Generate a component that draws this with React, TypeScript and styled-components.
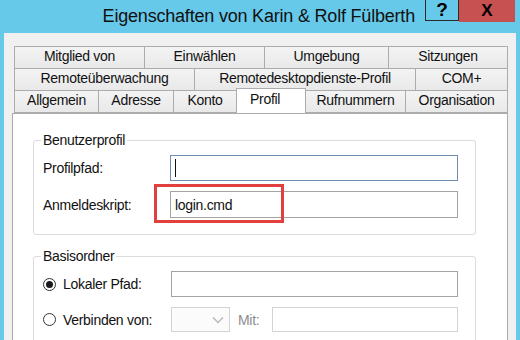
import React from 'react'
import styled, { createGlobalStyle, css } from 'styled-components'

const GlobalStyle = createGlobalStyle`
  html, body {
    margin: 0;
    padding: 0;
    background: #67c9ea;
  }
  body {
    font-family: 'Liberation Sans', Arial, sans-serif;
    color: #1a1a1a;
  }
`

const Window = styled.div`
  width: 520px;
  height: 340px;
  overflow: hidden;
  display: flex;
  flex-direction: column;
  background: #67c9ea;
`

const TitleBar = styled.div`
  height: 33px;
  flex: none;
  display: flex;
  align-items: flex-start;
  justify-content: flex-end;
  padding-right: 5px;
`

const Title = styled.div`
  font-size: 18px;
  line-height: 18px;
  letter-spacing: -0.2px;
  padding-top: 7px;
  margin-right: 10px;
  color: #111;
`

const CaptionButton = styled.div<{ close?: boolean }>(
  ({ close }) => css`
    height: ${close ? 22 : 21}px;
    width: ${close ? 56 : 34}px;
    box-sizing: border-box;
    display: flex;
    align-items: center;
    justify-content: center;
    font-weight: bold;
    color: #000;
    background: ${close ? '#c75050' : 'transparent'};
    border: 1px solid ${close ? '#c75050' : '#2b2b2b'};
    border-top: none;
    font-size: ${close ? 17 : 19}px;
  `,
)

const Client = styled.div`
  flex: 1;
  margin: 0 4px;
  background: #f0f0f0;
  padding: 13px 8px 0 8px;
  display: flex;
  flex-direction: column;
`

const TabRow = styled.div`
  display: flex;
  align-items: flex-start;
  height: 22px;
  margin-left: 2px;
`

const Tab = styled.div<{ w: number; selected?: boolean }>(
  ({ w, selected }) => css`
    box-sizing: border-box;
    width: ${w + 1}px;
    height: ${selected ? 25 : 23}px;
    margin-left: -1px;
    margin-top: ${selected ? -2 : 0}px;
    &:first-child {
      margin-left: 0;
    }
    border: 1px solid #acacac;
    border-bottom: ${selected ? 'none' : '1px solid #acacac'};
    background: ${selected ? '#fff' : 'linear-gradient(#f3f3f3, #e9e9e9)'};
    position: relative;
    z-index: ${selected ? 2 : 1};
    font-size: 14px;
    letter-spacing: -0.3px;
    text-align: ${selected ? 'left' : 'center'};
    padding-left: ${selected ? 13 : 0}px;
    line-height: ${selected ? 20 : 19}px;
    color: #111;
    white-space: nowrap;
  `,
)

const Panel = styled.div`
  flex: 1;
  margin-top: 1px;
  background: #fff;
  border: 1px solid #acacac;
  border-bottom: none;
  padding: 18px 31px 0 20px;
  position: relative;
  z-index: 0;
`

const Group = styled.fieldset<{ bottom: number }>(
  ({ bottom }) => css`
    margin: 0 0 13px 0;
    padding: 0 17px ${bottom}px 9px;
    border: 1px solid #dcdcdc;
    border-radius: 3px;
    min-width: 0;
  `,
)

const Legend = styled.legend`
  font-size: 14px;
  letter-spacing: -0.3px;
  line-height: 16px;
  padding: 0 2px;
  margin-left: -2px;
  color: #111;
`

const FieldRow = styled.div<{ gap?: number }>(
  ({ gap = 0 }) => css`
    display: flex;
    align-items: center;
    margin-top: ${gap}px;
  `,
)

const Label = styled.div<{ w: number; disabled?: boolean }>(
  ({ w, disabled }) => css`
    width: ${w}px;
    flex: none;
    font-size: 14px;
    letter-spacing: -0.3px;
    color: ${disabled ? '#8d8d8d' : '#111'};
    white-space: nowrap;
  `,
)

const TextBox = styled.div<{ tone?: 'focus' | 'normal' | 'disabled'; h?: number }>(
  ({ tone = 'normal', h = 26 }) => css`
    flex: 1;
    box-sizing: border-box;
    height: ${h}px;
    border: 1px solid
      ${tone === 'focus' ? '#6d8db3' : tone === 'disabled' ? '#d3d3d3' : '#a3a3a3'};
    background: #fff;
    display: flex;
    align-items: center;
    padding-left: 4px;
    font-size: 14px;
    letter-spacing: -0.3px;
    color: #111;
    position: relative;
  `,
)

const Caret = styled.span`
  width: 1px;
  height: 18px;
  background: #111;
`

const Highlight = styled.div`
  position: absolute;
  left: -17px;
  top: -8px;
  width: 130px;
  height: 39px;
  border: 3px solid #e2403f;
  box-sizing: border-box;
  pointer-events: none;
`

const Radio = styled.span<{ checked?: boolean }>(
  ({ checked }) => css`
    width: 13px;
    height: 13px;
    box-sizing: border-box;
    border: 1px solid #333;
    border-radius: 50%;
    background: #fff;
    display: inline-flex;
    align-items: center;
    justify-content: center;
    margin-right: 7px;
    flex: none;
    &::after {
      content: '';
      width: 7px;
      height: 7px;
      border-radius: 50%;
      background: ${checked ? '#1a1a1a' : 'transparent'};
    }
  `,
)

const RadioLabel = styled.div<{ w: number }>(
  ({ w }) => css`
    width: ${w}px;
    flex: none;
    display: flex;
    align-items: center;
    font-size: 14px;
    letter-spacing: -0.3px;
    color: #111;
    white-space: nowrap;
  `,
)

const Combo = styled.div`
  width: 59px;
  height: 25px;
  box-sizing: border-box;
  border: 1px solid #d3d3d3;
  background: #fbfbfb;
  display: flex;
  align-items: center;
  justify-content: flex-end;
  padding-right: 5px;
  margin-right: 8px;
  flex: none;
`

const tabs = [
  [
    ['Mitglied von', 130],
    ['Einwählen', 120],
    ['Umgebung', 124],
    ['Sitzungen', 119],
  ],
  [
    ['Remoteüberwachung', 180],
    ['Remotedesktopdienste-Profil', 221],
    ['COM+', 92],
  ],
  [
    ['Allgemein', 84],
    ['Adresse', 75],
    ['Konto', 63],
    ['Profil', 69],
    ['Rufnummern', 100],
    ['Organisation', 102],
  ],
] as const

export default function App() {
  return (
    <Window>
      <GlobalStyle />
      <TitleBar>
        <Title>Eigenschaften von Karin &amp; Rolf Fülberth</Title>
        <CaptionButton>?</CaptionButton>
        <CaptionButton close>X</CaptionButton>
      </TitleBar>
      <Client>
        {tabs.map((row, i) => (
          <TabRow key={i}>
            {row.map(([name, w]) => (
              <Tab key={name} w={w} selected={name === 'Profil'}>
                {name}
              </Tab>
            ))}
          </TabRow>
        ))}
        <Panel>
          <Group bottom={16}>
            <Legend>Benutzerprofil</Legend>
            <FieldRow gap={7}>
              <Label w={127}>Profilpfad:</Label>
              <TextBox tone="focus">
                <Caret />
              </TextBox>
            </FieldRow>
            <FieldRow gap={10}>
              <Label w={127}>Anmeldeskript:</Label>
              <TextBox h={27}>
                login.cmd
                <Highlight />
              </TextBox>
            </FieldRow>
          </Group>
          <Group bottom={30}>
            <Legend>Basisordner</Legend>
            <FieldRow gap={7}>
              <RadioLabel w={128}>
                <Radio checked />
                Lokaler Pfad:
              </RadioLabel>
              <TextBox>&nbsp;</TextBox>
            </FieldRow>
            <FieldRow gap={10}>
              <RadioLabel w={128}>
                <Radio />
                Verbinden von:
              </RadioLabel>
              <Combo>
                <svg width="12" height="8" viewBox="0 0 12 8">
                  <polyline
                    points="1,1.5 6,6.5 11,1.5"
                    fill="none"
                    stroke="#b8b8b8"
                    strokeWidth="1.5"
                  />
                </svg>
              </Combo>
              <Label w={34} disabled>
                Mit:
              </Label>
              <TextBox tone="disabled" h={25}>
                &nbsp;
              </TextBox>
            </FieldRow>
          </Group>
        </Panel>
      </Client>
    </Window>
  )
}
